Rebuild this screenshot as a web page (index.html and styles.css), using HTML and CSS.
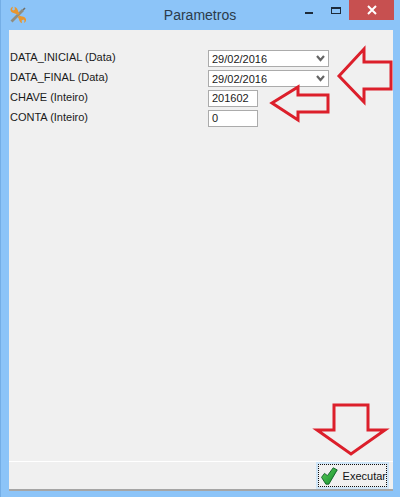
FILE: index.html
```html
<!DOCTYPE html>
<html lang="pt">
<head>
	<meta charset="UTF-8">
	<title>Parametros</title>
	<link rel="stylesheet" href="styles.css">
</head>
<body>
	<div class="window">
		<div class="titlebar">
			<svg class="app-icon" width="18" height="18" viewBox="0 0 18 18">
				<path d="M2.5 15.5 L14 4" stroke="#8f8d80" stroke-width="2.8" fill="none"/>
				<path d="M14 4 L16 2" stroke="#6f6f68" stroke-width="1.6" fill="none"/>
				<path d="M4 .8 C1.5 1.5 .8 4 2.4 6 C4 7.6 6.6 7 9 9 L10.6 7.4 C8.6 5.4 9 3 7 1.4 L5.5 .8 L6 3.4 L4.2 4.4 L3 3.4 Z" fill="#e8962e"/>
				<path d="M15 17 C17 16 17.8 14 16.4 12 C15 10.2 12.4 10.8 10.4 9.6 L8.8 11 C10.4 13 10 15 11.6 16.4 L13 17.2 L12.6 14.6 L14.4 13.6 L15.6 14.6 Z" fill="#e8962e"/>
			</svg>
			<span class="title">Parametros</span>
			<div class="controls">
				<span class="ctl-min"></span>
				<span class="ctl-max"></span>
				<span class="ctl-close">
					<svg width="10" height="10" viewBox="0 0 10 10"><path d="M1 1 L9 9 M9 1 L1 9" stroke="#fff" stroke-width="2"/></svg>
				</span>
			</div>
		</div>

		<div class="client">
			<div class="form">
				<label>DATA_INICIAL (Data)</label>
				<div class="field combo"><span class="val">29/02/2016</span><svg width="9" height="7" viewBox="0 0 9 7"><path d="M1 1 L4.5 5 L8 1" stroke="#666" stroke-width="2.2" fill="none"/></svg></div>
				<label>DATA_FINAL (Data)</label>
				<div class="field combo"><span class="val">29/02/2016</span><svg width="9" height="7" viewBox="0 0 9 7"><path d="M1 1 L4.5 5 L8 1" stroke="#666" stroke-width="2.2" fill="none"/></svg></div>
				<label>CHAVE (Inteiro)</label>
				<div class="field short">201602</div>
				<label>CONTA (Inteiro)</label>
				<div class="field short">0</div>
			</div>
			<div class="footer">
				<button class="run">
					<svg width="19" height="20" viewBox="0 0 19 20">
						<defs>
							<linearGradient id="check" x1="0" y1="0" x2="1" y2="1">
								<stop offset="0" stop-color="#5fd05a"/>
								<stop offset="1" stop-color="#0f8a2c"/>
							</linearGradient>
						</defs>
						<path d="M.6 11.5 L4 7 L7.4 9.6 L14 .6 L18.6 3 L9 19.4 L5.6 19.4 Z" fill="url(#check)" stroke="#0c5a22" stroke-width="1"/>
					</svg>
					<span>Executar</span>
				</button>
			</div>
		</div>

		<!-- setas vermelhas -->
		<svg class="arrows" width="400" height="497" viewBox="0 0 400 497">
			<path d="M338 76 L363 49 V62 H390 V89 H363 V102 Z"/>
			<path d="M271 103 L297 87 V95 H327 V112 H297 V120 Z"/>
			<path d="M333 405 H367 V430 H384 L350 454 L316 430 H333 Z"/>
		</svg>
	</div>
</body>
</html>
```

FILE: styles.css
```css
html, body {
	margin: 0;
	height: 100%;
}

body {
	font-family: "Liberation Sans", Arial, sans-serif;
	font-size: 11px;
	color: #1a1a1a;
}

.window {
	position: relative;
	width: 400px;
	height: 497px;
	box-sizing: border-box;
	display: flex;
	flex-direction: column;
	background: #8cc4f8;
	overflow: hidden;
	padding: 0 7px 6px 8px;
	border-left: 1px solid #74aee6;
}

.titlebar {
	height: 30px;
	flex: none;
	display: flex;
	align-items: center;
	margin: 0 -7px 0 -8px;
	position: relative;
}

.app-icon {
	margin: -1px 0 0 8px;
}

.title {
	position: absolute;
	left: -1px;
	right: 0;
	top: 7px;
	text-align: center;
	font-size: 14px;
	color: #2b3b4a;
}

.controls {
	position: absolute;
	top: 0;
	right: 6px;
	display: flex;
	align-items: flex-start;
}

.ctl-min {
	width: 8px;
	height: 2px;
	background: #1d2b3a;
	margin: 12px 18px 0 0;
}

.ctl-max {
	width: 8px;
	height: 4px;
	border: 1px solid #1d2b3a;
	border-top-width: 2px;
	margin: 7px 8px 0 0;
}

.ctl-close {
	width: 45px;
	height: 20px;
	background: #c75050;
	display: flex;
	align-items: center;
	justify-content: center;
}

.client {
	flex: 1;
	background: #f0f0f0;
	display: flex;
	flex-direction: column;
	border-bottom: 2px solid #a5a5a5;
}

.form {
	flex: 1;
	display: grid;
	grid-template-columns: 198px max-content;
	grid-auto-rows: 17px;
	row-gap: 3px;
	align-content: start;
	padding: 20px 0 0 1px;
}

label {
	line-height: 15px;
}

.field {
	box-sizing: border-box;
	border: 1px solid #ababab;
	background: #fff;
	height: 17px;
	line-height: 15px;
	padding-left: 3px;
}

.combo {
	width: 121px;
	display: flex;
	align-items: center;
	justify-content: space-between;
	padding-right: 3px;
}

/* the date is cut a little at the bottom in the original */
.val {
	align-self: flex-start;
	margin-top: 2px;
	height: 10px;
	line-height: 12px;
	overflow: hidden;
}

.short {
	width: 50px;
}

.footer {
	height: 27px;
	flex: none;
	border-top: 1px solid #fff;
	display: flex;
	justify-content: flex-end;
	padding-right: 4px;
}

.run {
	width: 73px;
	height: 27px;
	box-sizing: border-box;
	padding: 0 1px 0 3px;
	display: flex;
	align-items: center;
	gap: 5px;
	background: #f0f0f0;
	border: 2px solid #cfe5f7;
	outline: 1px dotted #111;
	outline-offset: -3px;
	font: inherit;
	color: #111;
}

.arrows {
	position: absolute;
	left: 0;
	top: 0;
	pointer-events: none;
}

.arrows path {
	fill: none;
	stroke: #dc1f2b;
	stroke-width: 3;
}
```
